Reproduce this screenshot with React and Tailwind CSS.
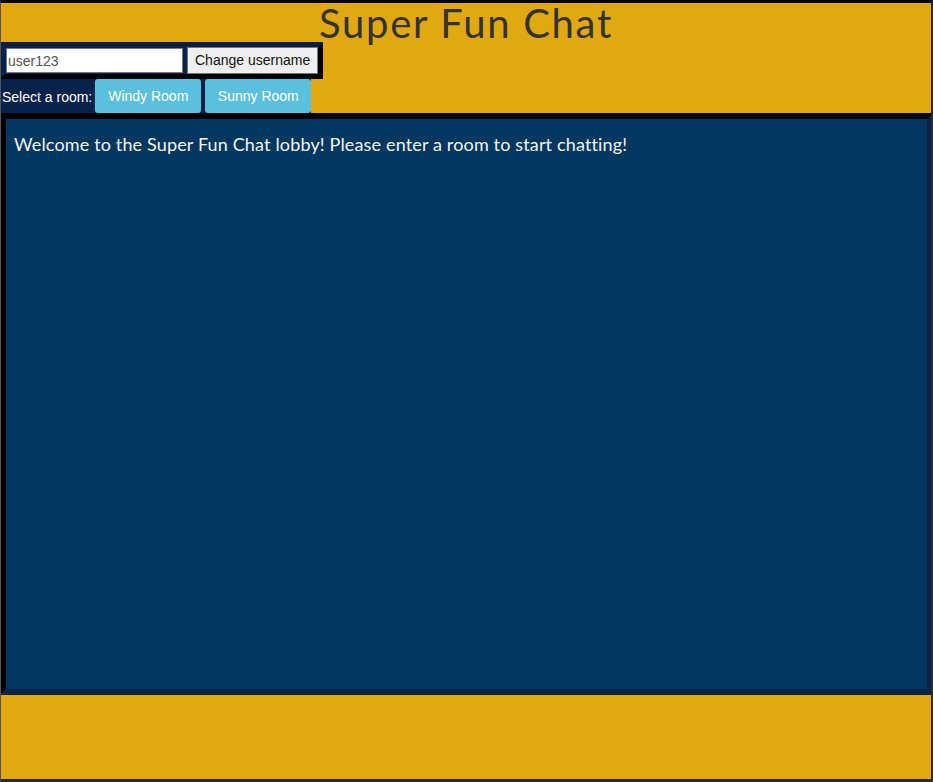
export default function App() {
  return (
    <div className="w-[933px] h-[782px] bg-[#e1a812] border-l border-l-[#555] border-t-[3px] border-t-black border-r-2 border-r-[#2a2a2a] border-b-[3px] border-b-[#2a2a2a] flex flex-col overflow-hidden">
      <h1
        className="text-center text-[40px] leading-[40px] h-[39px] text-[#333] tracking-[1.7px] whitespace-nowrap"
        style={{ fontFamily: "Lato, 'Noto Sans', sans-serif", fontWeight: 400 }}
      >
        Super Fun Chat
      </h1>
      <div className="self-start w-[323px] h-[37px] bg-[#06224a] border-[5px] border-t-[#0b1e3c] border-l-[#06224a] border-r-black border-b-black flex items-center gap-[4px] pl-[1px] -ml-[1px]">
        <input
          defaultValue="user123"
          className="w-[177px] shrink-0 h-[25px] bg-white border border-[#767676] px-[1px] text-[14px] text-[#555] outline-none"
          style={{ fontFamily: "'Liberation Sans', Arial, sans-serif" }}
        />
        <button
          className="h-[27px] shrink-0 whitespace-nowrap px-[7px] bg-[#efefef] border border-[#767676] text-[14px] text-[#111]"
          style={{ fontFamily: "'Liberation Sans', Arial, sans-serif" }}
        >
          Change username
        </button>
      </div>
      <div
        className="self-start h-[34px] bg-[#06224a] flex items-stretch -ml-[1px]"
        style={{ fontFamily: "'Liberation Sans', Arial, sans-serif" }}
      >
        <span className="text-white text-[14px] pl-[2px] pt-[8px] pr-[3px] whitespace-nowrap">Select a room:</span>
        <button className="w-[106px] bg-[#5bc0de] rounded-[3px] text-white text-[14px] whitespace-nowrap">Windy Room</button>
        <button className="ml-[4px] w-[106px] bg-[#5bc0de] rounded-[3px] text-white text-[14px] whitespace-nowrap">Sunny Room</button>
      </div>
      <div className="h-[582px] -ml-[1px] -mr-[2px] bg-[#02375f] border-[6px] border-t-black border-l-black border-r-[#0a2447] border-b-[#0a2447] pt-[12px] px-[8px]">
        <p
          className="text-[#f4f4f4] text-[18px] tracking-[0.15px] whitespace-nowrap"
          style={{ fontFamily: "Lato, 'Noto Sans', sans-serif" }}
        >
          Welcome to the Super Fun Chat lobby! Please enter a room to start chatting!
        </p>
      </div>
    </div>
  );
}
